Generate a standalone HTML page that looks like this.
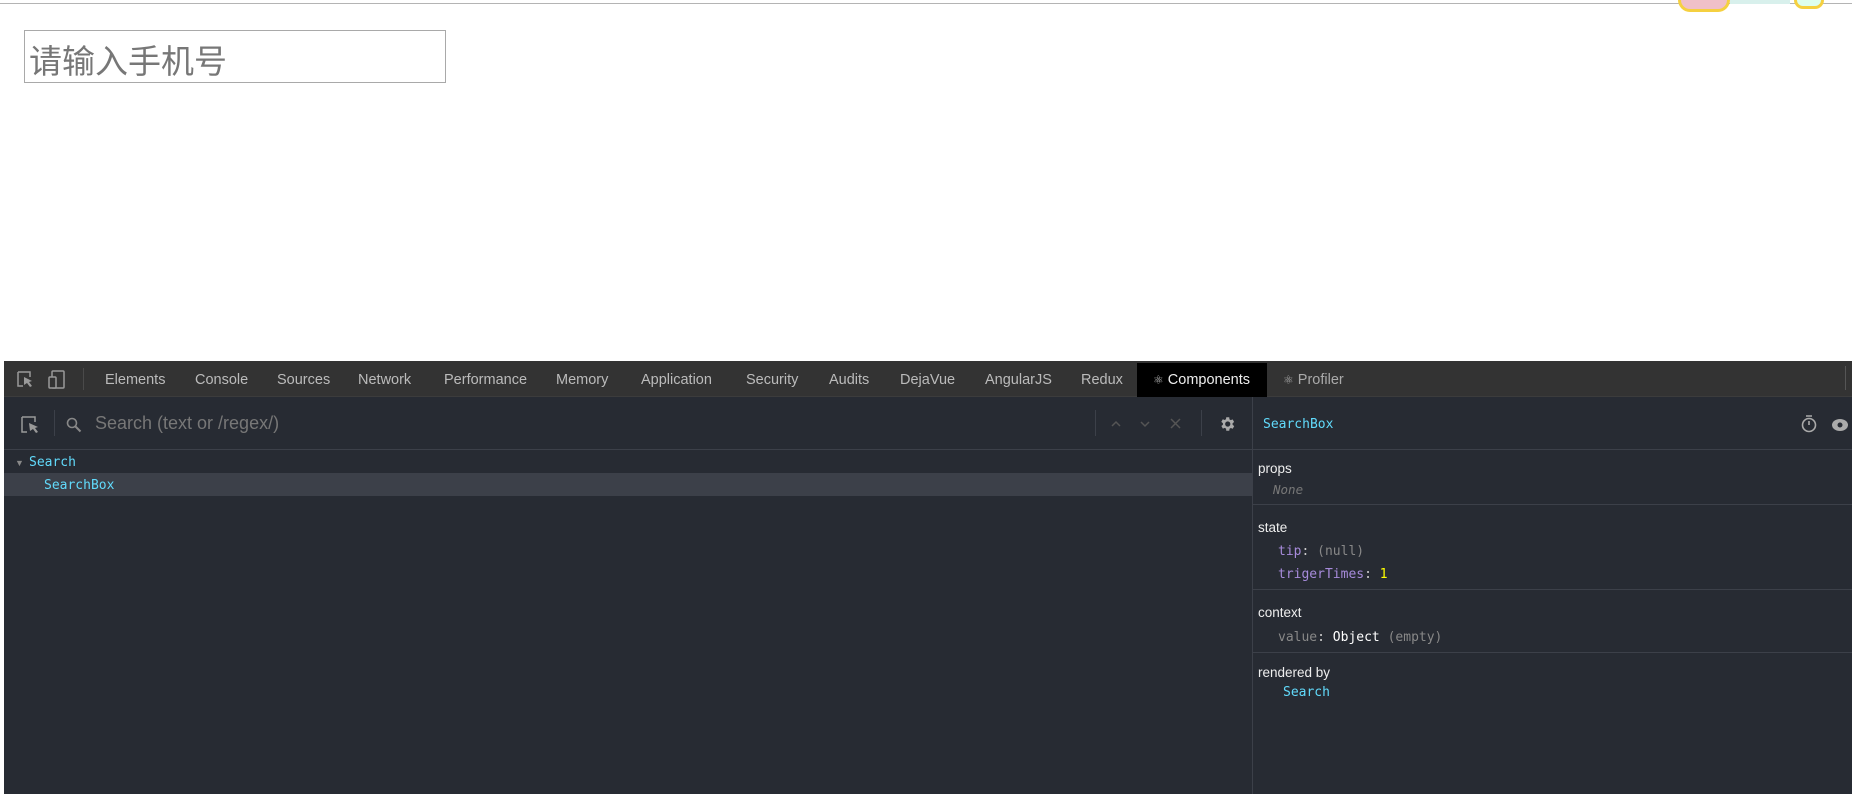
<!DOCTYPE html>
<html><head><meta charset="utf-8"><style>
*{margin:0;padding:0;box-sizing:border-box}
body{width:1852px;height:794px;background:#fff;position:relative;overflow:hidden;font-family:"Liberation Sans",sans-serif}
.a{position:absolute;white-space:nowrap}
.mono{font-family:"DejaVu Sans Mono","Liberation Mono",monospace}
</style></head><body>
<div class="a" style="left:0;top:3px;width:1852px;height:1px;background:#b4b4b4"></div>
<div class="a" style="left:1678px;top:0;width:52px;height:12px;background:#f0c0c8;border:3px solid #f5d040;border-top:none;border-radius:0 0 26px 26px"></div>
<div class="a" style="left:1730px;top:0;width:60px;height:4px;background:#d8f0ec"></div>
<div class="a" style="left:1794px;top:0;width:30px;height:9px;background:#dfe;border:3px solid #f5d040;border-top:none;border-radius:0 0 15px 15px"></div>
<div class="a" style="left:24px;top:30px;width:422px;height:53px;border:1px solid #a9a9a9"></div>
<div class="a" style="left:29px;top:35px;font-size:33px;color:#777;font-family:'Liberation Sans','Noto Sans CJK SC',sans-serif">请输入手机号</div>

<div class="a" style="left:4px;top:361px;width:1848px;height:433px;background:#272b33"></div>
<div class="a" style="left:4px;top:361px;width:1848px;height:36px;background:#333;border-bottom:1px solid #3c3c3c"></div>
<svg class="a" style="left:16px;top:369px" width="60" height="22" viewBox="0 0 60 22"><path d="M2 3h12v5M2 3v14h5" stroke="#999" fill="none" stroke-width="1.5"/><path d="M8 8l8 4-3 1 3 4-2 1-3-4-3 2z" fill="#999"/><rect x="36" y="2" width="12" height="17" rx="1" stroke="#999" fill="none" stroke-width="1.5"/><rect x="33" y="8" width="7" height="11" rx="1" stroke="#999" fill="#333" stroke-width="1.5"/></svg>
<div class="a" style="left:83px;top:368px;width:1px;height:22px;background:#4a4a4a"></div>
<div class="a" style="top:372px;left:0;font-size:14.5px;color:#bbb">
<span class="a" style="left:105px">Elements</span><span class="a" style="left:195px">Console</span><span class="a" style="left:277px">Sources</span><span class="a" style="left:358px">Network</span><span class="a" style="left:444px">Performance</span><span class="a" style="left:556px">Memory</span><span class="a" style="left:641px">Application</span><span class="a" style="left:746px">Security</span><span class="a" style="left:829px">Audits</span><span class="a" style="left:900px">DejaVue</span><span class="a" style="left:985px">AngularJS</span><span class="a" style="left:1081px">Redux</span></div>
<div class="a" style="left:1137px;top:363px;width:130px;height:34px;background:#000"></div>
<div class="a" style="left:1153px;top:372px;font-size:14.5px;color:#eee"><span style="color:#bbb;font-size:12px">⚛</span> Components</div>
<div class="a" style="left:1283px;top:372px;font-size:14.5px;color:#aaa"><span style="font-size:12px">⚛</span> Profiler</div>
<div class="a" style="left:1845px;top:366px;width:1px;height:24px;background:#555"></div>

<div class="a" style="left:4px;top:449px;width:1248px;height:1px;background:#3c4049"></div>
<div class="a" style="left:1253px;top:449px;width:599px;height:1px;background:#3c4049"></div>
<div class="a" style="left:1252px;top:397px;width:1px;height:397px;background:#3c4049"></div>
<svg class="a" style="left:20px;top:414px" width="22" height="22" viewBox="0 0 22 22"><path d="M2 3h13v5M2 3v15h5" stroke="#999" fill="none" stroke-width="1.5"/><path d="M9 9l9 4-3 1 3 4-2 1-3-4-3 2z" fill="#999"/></svg>
<div class="a" style="left:54px;top:410px;width:1px;height:26px;background:#3c4049"></div>
<svg class="a" style="left:66px;top:417px" width="16" height="16" viewBox="0 0 16 16"><circle cx="6" cy="6" r="4.5" stroke="#888" stroke-width="1.6" fill="none"/><path d="M9.5 9.5l5 5" stroke="#888" stroke-width="2"/></svg>
<div class="a" style="left:95px;top:413px;font-size:18px;color:#777">Search (text or /regex/)</div>
<div class="a" style="left:1095px;top:410px;width:1px;height:26px;background:#3c4049"></div>
<div class="a" style="left:1201px;top:410px;width:1px;height:26px;background:#3c4049"></div>
<svg class="a" style="left:1108px;top:416px" width="80" height="16" viewBox="0 0 80 16"><path d="M4 10l4-4 4 4M33 6l4 4 4-4" stroke="#555" fill="none" stroke-width="1.5"/><path d="M63 3l9 9M72 3l-9 9" stroke="#555" stroke-width="1.5"/></svg>
<svg class="a" style="left:1218px;top:415px" width="18" height="18" viewBox="0 0 24 24"><path fill="#aaa" d="M19.4 13a7.5 7.5 0 000-2l2.1-1.6-2-3.5-2.5 1a7 7 0 00-1.7-1L15 3h-4l-.4 2.7a7 7 0 00-1.7 1l-2.5-1-2 3.5L6.6 11a7.5 7.5 0 000 2l-2.1 1.6 2 3.5 2.5-1a7 7 0 001.7 1L11 21h4l.4-2.7a7 7 0 001.7-1l2.5 1 2-3.5zM13 15.5a3.5 3.5 0 110-7 3.5 3.5 0 010 7z"/></svg>
<div class="a mono" style="left:1263px;top:417px;font-size:13px;color:#61dafb">SearchBox</div>
<svg class="a" style="left:1800px;top:414px" width="50" height="20" viewBox="0 0 50 20"><circle cx="9" cy="11" r="6.5" stroke="#aaa" stroke-width="1.6" fill="none"/><path d="M6 2h6M9 7v4" stroke="#aaa" stroke-width="1.6"/><ellipse cx="40" cy="11" rx="8" ry="6" fill="#aaa"/><circle cx="40" cy="11" r="2.5" fill="#272b33"/></svg>

<div class="a" style="left:4px;top:473px;width:1248px;height:23px;background:#3c4049"></div>
<div class="a" style="left:15px;top:458px;font-size:9px;color:#888">▼</div>
<div class="a mono" style="left:29px;top:455px;font-size:13px;color:#61dafb">Search</div>
<div class="a mono" style="left:44px;top:478px;font-size:13px;color:#61dafb">SearchBox</div>

<div class="a" style="left:1258px;top:461px;font-size:13.5px;color:#eee">props</div>
<div class="a mono" style="left:1273px;top:482px;font-size:12.5px;color:#777;font-style:italic">None</div>
<div class="a" style="left:1253px;top:504px;width:599px;height:1px;background:#3c4049"></div>
<div class="a" style="left:1258px;top:520px;font-size:13.5px;color:#eee">state</div>
<div class="a mono" style="left:1278px;top:544px;font-size:13px;color:#888"><span style="color:#a78bdb">tip</span><span style="color:#ccc">:</span>&nbsp;(null)</div>
<div class="a mono" style="left:1278px;top:567px;font-size:13px;color:#ccc"><span style="color:#a78bdb">trigerTimes</span>:&nbsp;<span style="color:#ff0">1</span></div>
<div class="a" style="left:1253px;top:589px;width:599px;height:1px;background:#3c4049"></div>
<div class="a" style="left:1258px;top:605px;font-size:13.5px;color:#eee">context</div>
<div class="a mono" style="left:1278px;top:630px;font-size:13px;color:#888">value<span style="color:#ccc">:</span>&nbsp;<span style="color:#fff">Object</span> (empty)</div>
<div class="a" style="left:1253px;top:652px;width:599px;height:1px;background:#3c4049"></div>
<div class="a" style="left:1258px;top:665px;font-size:13.5px;color:#eee">rendered by</div>
<div class="a mono" style="left:1283px;top:685px;font-size:13px;color:#61dafb">Search</div>
</body></html>
